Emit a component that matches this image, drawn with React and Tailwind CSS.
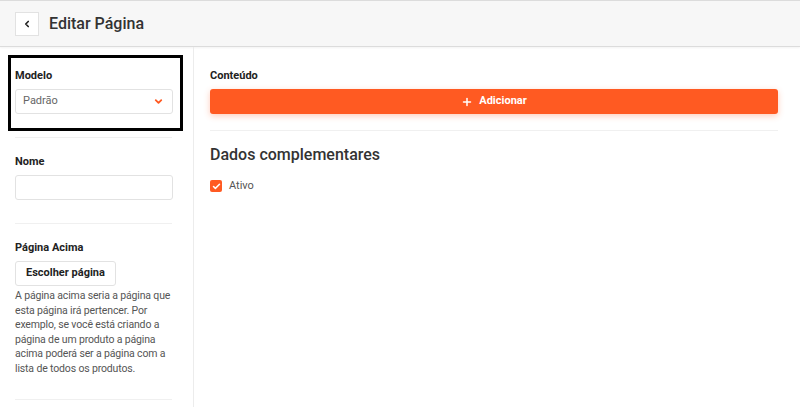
import { ChevronLeft, ChevronDown, Plus, Check } from 'lucide-react';

const font = { fontFamily: 'Roboto, "Liberation Sans", Arial, sans-serif' };

const App = () => {
  return (
    <div className="w-[800px] h-[407px] overflow-hidden bg-white text-[#333]" style={font}>
      {/* topo */}
      <div className="h-[47px] bg-[#f7f7f7] border-t border-b border-[#dcdcdc] flex items-center pl-[15px] shadow-[0_1px_2px_rgba(0,0,0,0.05)]">
        <button className="w-[24px] h-[24px] bg-white border border-[#e2e2e2] flex items-center justify-center">
          <ChevronLeft size={10} strokeWidth={4} className="text-[#222]" />
        </button>
        <h1 className="ml-[10px] text-[16px] font-medium text-[#333]">Editar Página</h1>
      </div>

      <div className="flex h-[360px]">
        {/* lateral */}
        <aside className="w-[194px] shrink-0 border-r border-[#ececec]">
          <div className="mt-[8px] ml-[8px] w-[175px] border-[3px] border-black pl-[4px] pr-[7px] pt-[11px] pb-[14px]">
            <label className="block text-[11px] font-bold text-[#222] leading-[13px]">Modelo</label>
            <div className="mt-[7px] h-[25px] border border-[#e2e2e2] rounded-[3px] flex items-center justify-between pl-[7px] pr-[8px]">
              <span className="text-[11px] text-[#666]">Padrão</span>
              <ChevronDown size={11} strokeWidth={4} className="text-[#ff5a22]" />
            </div>
          </div>

          <div className="ml-[15px] mr-[21px] mt-[6px] border-t border-[#f0f0f0]" />

          <div className="pl-[15px] pr-[21px] pt-[17px]">
            <label className="block text-[11px] font-bold text-[#222] leading-[13px]">Nome</label>
            <input className="mt-[7px] w-[158px] h-[25px] border border-[#e2e2e2] rounded-[3px] outline-none" />
          </div>

          <div className="ml-[15px] mr-[21px] mt-[23px] border-t border-[#f0f0f0]" />

          <div className="pl-[15px] pr-[21px] pt-[17px]">
            <label className="block text-[11px] font-bold text-[#222] leading-[13px]">Página Acima</label>
            <button className="mt-[7px] h-[25px] px-[10px] border border-[#e2e2e2] rounded-[3px] text-[11px] font-bold text-[#222]">
              Escolher página
            </button>
            <p className="mt-[3px] w-[162px] text-[10.5px] tracking-[-0.15px] leading-[14.6px] text-[#555]">
              A página acima seria a página que esta página irá pertencer. Por exemplo, se você está criando a página de um produto a página acima poderá ser a página com a lista de todos os produtos.
            </p>
          </div>

          <div className="ml-[15px] mr-[21px] mt-[22px] border-t border-[#f0f0f0]" />
        </aside>

        {/* conteúdo */}
        <main className="flex-1 pl-[16px] pr-[22px] pt-[22px]">
          <label className="block text-[11px] font-bold text-[#222] leading-[13px]">Conteúdo</label>
          <button className="mt-[7px] w-full h-[25px] bg-[#ff5a22] rounded-[3px] flex items-center justify-center gap-[6px] text-white text-[11px] font-bold shadow-[0_2px_6px_rgba(255,90,34,0.3)]">
            <Plus size={12} strokeWidth={3} />
            Adicionar
          </button>

          <div className="mt-[16px] border-t border-[#f0f0f0]" />

          <h2 className="mt-[14px] text-[16px] font-medium text-[#333] leading-[20px]">Dados complementares</h2>

          <div className="mt-[13px] flex items-center gap-[7px]">
            <span className="w-[12px] h-[12px] rounded-[2px] bg-[#ff5a22] flex items-center justify-center">
              <Check size={9} strokeWidth={4} className="text-white" />
            </span>
            <span className="text-[11px] text-[#555]">Ativo</span>
          </div>
        </main>
      </div>
    </div>
  );
};

export default App;
